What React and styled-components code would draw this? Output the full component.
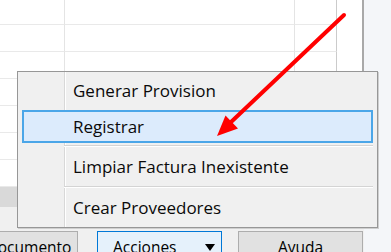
import React from 'react'
import styled, { createGlobalStyle, css } from 'styled-components'

const GlobalStyle = createGlobalStyle`
  html, body {
    margin: 0;
    padding: 0;
    background: #ffffff;
    overflow: hidden;
    font-family: "Open Sans", "Noto Sans", sans-serif;
  }
`

const Page = styled.div`
  position: relative;
  width: 391px;
  height: 252px;
  overflow: hidden;
  display: flex;
`

const Main = styled.div`
  width: 364px;
  display: flex;
  flex-direction: column;
`

const Grid = styled.div`
  flex: none;
  height: 187px;
  display: grid;
  grid-template-columns: 65px 230px 42px 25px;
  grid-template-rows: 25px repeat(6, 27px);
  background: #ffffff;
  border-right: 2px solid #a9a9a9;
`

const Cell = styled.div`
  box-sizing: border-box;
  border-right: 1px solid ${(p) => (p.$col === 2 ? '#cbcbcb' : p.$col === 3 ? 'transparent' : '#e4e4e4')};
  border-bottom: 1px solid ${(p) => (p.$col === 3 ? 'transparent' : '#e9e9e9')};
`

const ScrollBand = styled.div`
  flex: none;
  height: 20px;
  background: #d9d9d9;
`

const FormArea = styled.div`
  flex: none;
  height: 24px;
  background: #f0f0f0;
`

const ButtonBar = styled.div`
  flex: none;
  height: 21px;
  overflow: hidden;
  display: flex;
  align-items: flex-start;
  background: #f0f0f0;
`

const Button = styled.div`
  box-sizing: border-box;
  flex: none;
  width: ${(p) => p.$w}px;
  margin-left: ${(p) => p.$ml}px;
  height: 34px;
  display: flex;
  align-items: flex-start;
  justify-content: center;
  padding-top: 8px;
  font-size: 15.5px;
  line-height: 1;
  color: #000;
  background: #e1e1e1;
  border: 1px solid #adadad;

  ${(p) =>
    p.$active &&
    css`
      justify-content: flex-start;
      padding-left: 15px;
      background: #e5f1fb;
      border-color: #0078d7;
    `}
`

const DropCaret = styled.span`
  margin-left: auto;
  margin-right: 6px;
  margin-top: 4px;
  width: 0;
  height: 0;
  border-left: 5.5px solid transparent;
  border-right: 5.5px solid transparent;
  border-top: 7px solid #000;
`

const Side = styled.div`
  flex: 1;
  background: #f4f6f9;
`

const Menu = styled.div`
  position: absolute;
  left: 17px;
  top: 71px;
  width: 361px;
  box-sizing: border-box;
  border: 1px solid #979797;
  box-shadow: 1px 1px 0 #cfcfcf;
  background: linear-gradient(
    to right,
    #f0f0f0 0 46px,
    #d8d8d8 46px 47px,
    #ffffff 47px 48px,
    #f0f0f0 48px
  );
  display: flex;
  flex-direction: column;
`

const MenuItem = styled.div`
  box-sizing: border-box;
  height: ${(p) => p.$h}px;
  padding-left: 55px;
  display: flex;
  align-items: center;
  font-size: 17px;
  line-height: 1;
  color: #0a0a0a;
  white-space: nowrap;

  ${(p) =>
    p.$selected &&
    css`
      height: ${p.$h - 3}px;
      margin: 1px 4px 2px;
      padding-left: 49px;
      background: #dcebfc;
      border: 2px solid #4ba6e8;
    `}
`

const Separator = styled.div`
  height: 0;
  margin-left: 46px;
  margin-right: 4px;
  border-top: 1px solid #d4d4d4;
  border-bottom: 1px solid #ffffff;
`

const ArrowLayer = styled.svg`
  position: absolute;
  left: 0;
  top: 0;
  pointer-events: none;
`

const cols = [0, 1, 2, 3]
const rows = [0, 1, 2, 3, 4, 5, 6]

export default function App() {
  return (
    <>
      <GlobalStyle />
      <Page>
        <Main>
          <Grid>
            {rows.map((r) => cols.map((c) => <Cell key={`${r}-${c}`} $col={c} />))}
          </Grid>
          <ScrollBand />
          <FormArea />
          <ButtonBar>
            <Button $w={98} $ml={-20}>Documento</Button>
            <Button $w={125} $ml={19} $active>
              Acciones
              <DropCaret />
            </Button>
            <Button $w={125} $ml={16}>Ayuda</Button>
          </ButtonBar>
        </Main>
        <Side />

        <Menu>
          <MenuItem $h={37}>Generar Provision</MenuItem>
          <MenuItem $h={36} $selected>Registrar</MenuItem>
          <Separator />
          <MenuItem $h={39}>Limpiar Factura Inexistente</MenuItem>
          <Separator />
          <MenuItem $h={39}>Crear Proveedores</MenuItem>
        </Menu>

        <ArrowLayer width="391" height="252" viewBox="0 0 391 252">
          <line x1="344" y1="15" x2="230" y2="123" stroke="#ff0000" strokeWidth="4" strokeLinecap="round" />
          <polygon points="217,136 238,128.5 225.5,115.5" fill="#ff0000" />
        </ArrowLayer>
      </Page>
    </>
  )
}
